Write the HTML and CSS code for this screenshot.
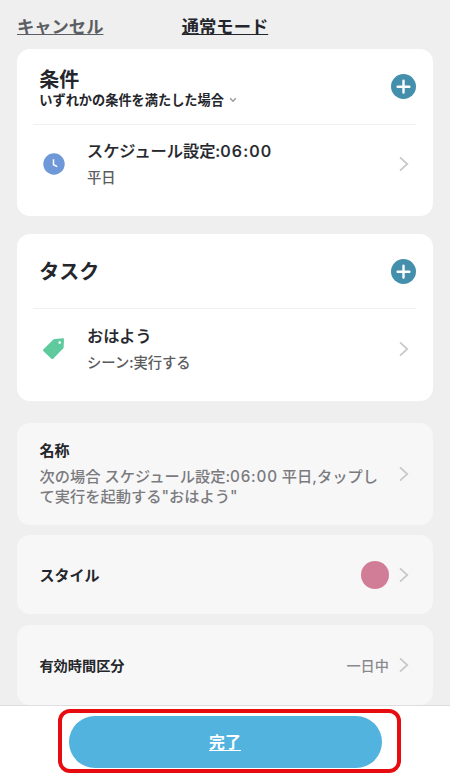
FILE: index.html
```html
<!DOCTYPE html>
<html lang="ja">
<head>
<meta charset="utf-8">
<title>通常モード</title>
<link rel="stylesheet" href="styles.css">
</head>
<body>
<div class="screen">
  <header class="topbar">
    <a class="cancel">キャンセル</a>
    <h1 class="title">通常モード</h1>
  </header>
  <main class="content">
    <section class="card group">
      <div class="group-head head-first">
        <div>
          <h2>条件</h2>
          <div class="match"><span>いずれかの条件を満たした場合</span><svg class="caret" width="8" height="6" viewBox="0 0 8 6"><path d="M1.2 1.2 4 4.2 6.8 1.2"/></svg></div>
        </div>
        <svg class="plus" width="25" height="25" viewBox="0 0 25 25"><circle cx="12.5" cy="12.5" r="12.5"/><path d="M12.5 6.8v11.8M6.6 12.7h11.8"/></svg>
      </div>
      <div class="item">
        <svg class="icon" width="22" height="22" viewBox="0 0 22 22"><circle cx="11" cy="11" r="10.7" fill="#6e98d8"/><path d="M10.5 6.3v5.5l3.8 1.8" fill="none" stroke="#fff" stroke-width="1.5"/></svg>
        <div class="item-text">
          <div class="name">スケジュール設定:<span class="time">06:00</span></div>
          <div class="detail">平日</div>
        </div>
        <svg class="chevron" width="10" height="16" viewBox="0 0 10 16"><path d="M1 1.3 8.3 8 1 14.7"/></svg>
      </div>
    </section>
    <section class="card group">
      <div class="group-head">
        <h2>タスク</h2>
        <svg class="plus" width="25" height="25" viewBox="0 0 25 25"><circle cx="12.5" cy="12.5" r="12.5"/><path d="M12.5 6.8v11.8M6.6 12.7h11.8"/></svg>
      </div>
      <div class="item">
        <svg class="icon" width="22" height="22" viewBox="0 0 22 22"><path d="M11.8 1 20 .2q1 0 1 .9l-.4 8.3q0 .7-.5 1.2L10.2 20.7q-.9.8-1.8 0L.3 13q-.8-.8 0-1.6L10.4 1.6q.6-.5 1.4-.6Z" fill="#5fca9e"/><circle cx="16.7" cy="4.6" r="1.3" fill="#fff"/></svg>
        <div class="item-text">
          <div class="name">おはよう</div>
          <div class="detail">シーン:実行する</div>
        </div>
        <svg class="chevron" width="10" height="16" viewBox="0 0 10 16"><path d="M1 1.3 8.3 8 1 14.7"/></svg>
      </div>
    </section>
    <section class="card setting name-setting">
      <div class="setting-text">
        <h3>名称</h3>
        <p>次の場合 スケジュール設定:<span class="time">06:00</span> 平日,タップし<br>て実行を起動する"おはよう"</p>
      </div>
      <svg class="chevron" width="10" height="16" viewBox="0 0 10 16"><path d="M1 1.3 8.3 8 1 14.7"/></svg>
    </section>
    <section class="card setting">
      <h3>スタイル</h3>
      <span class="swatch"></span>
      <svg class="chevron" width="10" height="16" viewBox="0 0 10 16"><path d="M1 1.3 8.3 8 1 14.7"/></svg>
    </section>
    <section class="card setting period">
      <h3>有効時間区分</h3>
      <span class="value">一日中</span>
      <svg class="chevron" width="10" height="16" viewBox="0 0 10 16"><path d="M1 1.3 8.3 8 1 14.7"/></svg>
    </section>
  </main>
  <footer class="footer">
    <div class="highlight"><button class="done">完了</button></div>
  </footer>
</div>
</body>
</html>
```

FILE: styles.css
```css
* { box-sizing: border-box; }
body {
  margin: 0;
  background: #efefef;
  color: #24262b;
  font-family: "Noto Sans CJK JP", sans-serif;
}
h1, h2, h3, p { margin: 0; }
svg { display: block; flex: none; }
.screen {
  width: 450px;
  height: 780px;
  display: flex;
  flex-direction: column;
  overflow: hidden;
}
.topbar {
  height: 49.4px;
  flex: none;
  display: grid;
  grid-template-columns: 1fr auto 1fr;
  align-items: center;
  padding: 2.6px 17px 0;
  line-height: 26px;
}
.cancel, .title {
  font-size: 17.3px;
  font-weight: 700;
  text-decoration: underline;
  text-decoration-thickness: 1px;
  text-underline-offset: 1px;
  text-decoration-skip-ink: none;
}
.cancel { color: #5b5e62; }
.content { flex: 1; min-height: 0; padding: 0 17px; }
.card { background: #fff; border-radius: 13px; }
.group { height: 167px; padding: 0 17.5px 0 16px; margin-bottom: 17.6px; }
.group-head {
  height: 75.5px;
  display: flex;
  align-items: center;
  justify-content: space-between;
  padding-left: 6.3px;
  border-bottom: 1px solid #f0f0f0;
}
h2 { font-size: 20px; line-height: 24px; font-weight: 700; }
.head-first h2 { padding-top: 2px; line-height: 23px; margin-bottom: 1px; }
.match {
  display: flex;
  align-items: center;
  gap: 5px;
  font-size: 13.2px;
  line-height: 18px;
  font-weight: 700;
}
.caret { fill: none; stroke: #999; stroke-width: 1.4; }
.plus { fill: #438fac; }
.plus path { stroke: #fff; stroke-width: 2.4; stroke-linecap: round; }
.item { display: flex; align-items: center; height: 79px; padding: 0 7px 0 10px; }
.icon { margin-right: 22px; }
.item-text { flex: 1; padding-top: 1px; }
.name {
  font-family: Inter, "Noto Sans CJK JP", sans-serif;
  font-size: 16.2px;
  line-height: 25px;
  font-weight: 500;
  -webkit-text-stroke: .2px;
}
.time { letter-spacing: .8px; }
.name .time { letter-spacing: 1.1px; }
.detail { font-size: 14.3px; line-height: 26px; font-weight: 500; color: #5a5c60; }
.chevron { fill: none; stroke: #c8c8cb; stroke-width: 1.7; }
.setting {
  background: #f7f7f7;
  height: 78.6px;
  margin-bottom: 10.8px;
  padding: 0 24px 0 22.4px;
  display: flex;
  align-items: center;
}
h3 { flex: 1; font-size: 15px; line-height: 24px; font-weight: 700; }
.name-setting { height: 102px; margin: 21.8px 0 10.5px; }
.setting-text { flex: 1; }
.setting-text h3 { margin-bottom: 5px; }
.setting-text p {
  font-family: Inter, "Noto Sans CJK JP", sans-serif;
  font-size: 15.25px;
  line-height: 20px;
  font-weight: 500;
  color: #7b7b7f;
  white-space: nowrap;
  margin-bottom: 3px;
}
.swatch { width: 28px; height: 28px; border-radius: 50%; background: #d17d98; margin-right: 10px; }
.period { height: 80.3px; }
.period h3 { font-size: 14.2px; }
.value { font-size: 14.2px; font-weight: 500; color: #8a8a8e; margin-right: 10px; }
.footer {
  height: 75px;
  flex: none;
  border-top: 1px solid #dedede;
  background: #fff;
  padding: 3px 49px 0 58px;
}
.highlight { height: 64px; border: 4px solid #e60c0f; border-radius: 12px; padding: 3px 16px 0 6.5px; }
.done {
  display: block;
  width: 313px;
  height: 52px;
  border: 0;
  border-radius: 26px;
  background: #52b3de;
  color: #fff;
  font: 700 16px "Noto Sans CJK JP", sans-serif;
  text-decoration: underline;
  text-decoration-thickness: 1px;
  text-underline-offset: 2px;
  text-decoration-skip-ink: none;
  padding-bottom: 3px;
}
```
